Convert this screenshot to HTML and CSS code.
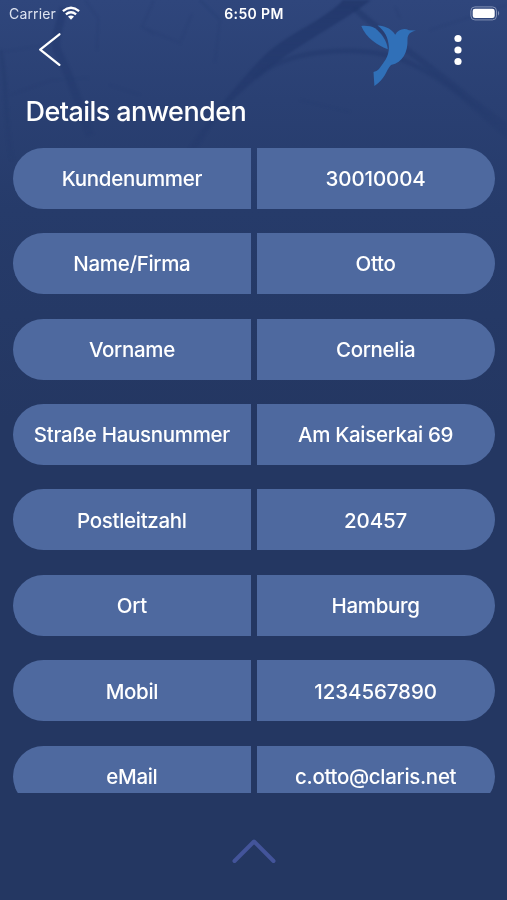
FILE: index.html
```html
<!DOCTYPE html>
<html lang="de">
<head>
<meta charset="utf-8">
<title>Details anwenden</title>
<link rel="stylesheet" href="styles.css">
</head>
<body>
<div class="screen">
  <svg class="map" viewBox="0 0 507 300" aria-hidden="true">
    <defs>
      <linearGradient id="fade" x1="0" y1="0" x2="0" y2="1">
        <stop offset="0" stop-color="#fff"/>
        <stop offset=".3" stop-color="#fff" stop-opacity=".7"/>
        <stop offset=".62" stop-color="#fff" stop-opacity="0"/>
      </linearGradient>
      <mask id="fademask"><rect width="507" height="300" fill="url(#fade)"/></mask>
    </defs>
    <g mask="url(#fademask)" fill="none" stroke="#20366a">
      <path d="M343 0H371C345 20 310 38 284 57C262 73 235 95 215 120L196 150H188C210 116 245 75 265 55C290 32 325 20 343 0Z" fill="#20366a" stroke="none" opacity=".75"/>
      <path d="M255 78C285 50 350 45 395 57C445 75 470 105 507 135" stroke-width="5" opacity=".5"/>
      <path d="M354 8C390 40 430 65 465 95L510 130" stroke-width="6" opacity=".5"/>
      <path d="M64 8C58 30 54 40 57 50C68 72 77 95 90 135" stroke-width="8" opacity=".45"/>
      <path d="M0 50C8 80 3 110 12 160" stroke-width="4" opacity=".4"/>
      <path d="M154 0L142 27L180 43L192 14M142 27L155 35M85 0L98 18L97 50M0 52L48 45M10 95L52 80L88 78M200 0L220 20L215 62M400 18L395 7M430 30L507 5M300 100L350 112M110 85L140 95" stroke-width="1.2" opacity=".28"/>
    </g>
  </svg>

  <header class="status">
    <div class="network">
      <span class="carrier">Carrier</span>
      <svg class="wifi" viewBox="0 0 18 14" aria-hidden="true">
        <g fill="none" stroke="#fff" stroke-width="2.3">
          <path d="M.9 5.1Q9-1.7 17.1 5.1"/>
          <path d="M3.9 8.4Q9 4.1 14.1 8.4"/>
        </g>
        <path d="M6 10.6Q9 8.3 12 10.6L9 13.7Z" fill="#fff"/>
      </svg>
    </div>
    <span class="time">6:50 PM</span>
    <svg class="battery" viewBox="0 0 31 15" aria-hidden="true">
      <rect x=".9" y=".9" width="25.6" height="13" rx="4" fill="none" stroke="#8291b5"/>
      <rect x="2.7" y="2.7" width="22" height="9.4" rx="2.3" fill="#fff"/>
      <path d="M28 4.8Q30.4 7.3 28 9.8Z" fill="#8291b5"/>
    </svg>
  </header>

  <nav class="toolbar">
    <svg class="back" viewBox="0 0 24 34" aria-label="Zurück"><path d="M21.4 1.3L2.2 16.6L21.4 31.8" fill="none" stroke="#fff" stroke-width="2.3" stroke-linecap="round" stroke-linejoin="round"/></svg>
    <svg class="bird" viewBox="0 0 56 64" aria-hidden="true">
      <g fill="#3070b8">
        <path d="M.3 2C5 1.6 10 2 14 4.3C20 8.5 26 17 26.8 25.2C17 21.5 5 14 .3 2Z"/>
        <path d="M16.5 1.5C26 2 31.5 6 34.2 10.8C37 5.5 43 3.5 48 6.2L55 6.5C49.5 7.8 46.8 10 46.5 15C47 28 42 38.5 30 41C24.5 47 24.5 55 13.4 62L12.5 48C14.5 47.7 16.5 46.5 18 45C23 38 28 33 27.9 23C27.3 13.5 23.5 6.5 16.5 1.5Z"/>
      </g>
    </svg>
    <svg class="more" viewBox="0 0 8 32" aria-label="Menü"><g fill="#fff"><circle cx="4" cy="4.5" r="3.6"/><circle cx="4" cy="16" r="3.6"/><circle cx="4" cy="27.5" r="3.6"/></g></svg>
  </nav>

  <h1 class="title">Details anwenden</h1>

  <main class="list">
    <div class="row"><div class="cell"><span>Kundenummer</span></div><div class="cell number"><span>30010004</span></div></div>
    <div class="row"><div class="cell"><span>Name/Firma</span></div><div class="cell"><span>Otto</span></div></div>
    <div class="row"><div class="cell"><span>Vorname</span></div><div class="cell"><span>Cornelia</span></div></div>
    <div class="row"><div class="cell"><span>Straße Hausnummer</span></div><div class="cell"><span>Am Kaiserkai 69</span></div></div>
    <div class="row"><div class="cell"><span>Postleitzahl</span></div><div class="cell number"><span>20457</span></div></div>
    <div class="row"><div class="cell"><span>Ort</span></div><div class="cell"><span>Hamburg</span></div></div>
    <div class="row"><div class="cell"><span>Mobil</span></div><div class="cell number"><span>1234567890</span></div></div>
    <div class="row"><div class="cell"><span>eMail</span></div><div class="cell"><span>c.otto@claris.net</span></div></div>
  </main>

  <footer class="footer">
    <svg class="up" viewBox="0 0 44 26" aria-hidden="true"><path d="M2.5 23L22 3.5L41.5 23" fill="none" stroke="#43549a" stroke-width="4" stroke-linecap="round" stroke-linejoin="round"/></svg>
  </footer>
</div>
</body>
</html>
```

FILE: styles.css
```css
* { box-sizing: border-box; }

body {
  margin: 0;
  background: #243762;
  color: #fff;
  font-family: Inter, "Liberation Sans", sans-serif;
}

.screen {
  position: relative;
  display: flex;
  flex-direction: column;
  width: 507px;
  height: 900px;
  overflow: hidden;
  background: linear-gradient(#2f467c 0, #2a4073 100px, #263b6a 210px, #243762 420px);
}

.map {
  position: absolute;
  top: 0;
  left: 0;
  width: 507px;
  height: 300px;
  filter: blur(.8px);
}

.status, .toolbar, .title, .list, .footer { position: relative; }

.status {
  display: grid;
  grid-template-columns: 1fr auto 1fr;
  align-items: center;
  height: 27px;
  padding: 0 6px 0 9px;
}

.network { display: flex; align-items: center; gap: 6px; }
.carrier { font-size: 14px; letter-spacing: .15px; color: #dce2ef; }
.wifi { width: 18px; height: 14px; margin-top: -1px; }
.time { margin-right: 2px; font-size: 14px; font-weight: 600; letter-spacing: .35px; }
.battery { width: 31px; height: 15px; justify-self: end; }

.toolbar {
  display: flex;
  height: 64px;
  padding: 6px 45px 0 38px;
}

.back { width: 24px; height: 34px; }
.bird { width: 56px; height: 64px; margin: -9px 0 0 auto; }
.more { width: 8px; height: 32px; margin: 1px 0 0 37px; }

.title {
  height: 56.7px;
  margin: 0;
  padding-left: 25.5px;
  font-size: 27px;
  line-height: 41px;
  font-weight: 500;
  letter-spacing: -.57px;
}

.list {
  display: flex;
  flex-direction: column;
  gap: 24.45px;
  height: 645px;
  padding: 0 12.5px 0 13px;
  overflow: hidden;
}

.row {
  display: grid;
  grid-template-columns: 1fr 1fr;
  flex: none;
  gap: 6px;
  height: 61px;
  border-radius: 30.5px;
  overflow: hidden;
}

.cell {
  display: flex;
  align-items: center;
  justify-content: center;
  padding-top: .6px;
  background: #4e699f;
  font-size: 20.5px;
  font-weight: 500;
  letter-spacing: -.32px;
  white-space: nowrap;
}

.number { letter-spacing: -.1px; }

.footer { display: flex; justify-content: center; padding-top: 45px; }
.up { width: 44px; height: 26px; }
```
